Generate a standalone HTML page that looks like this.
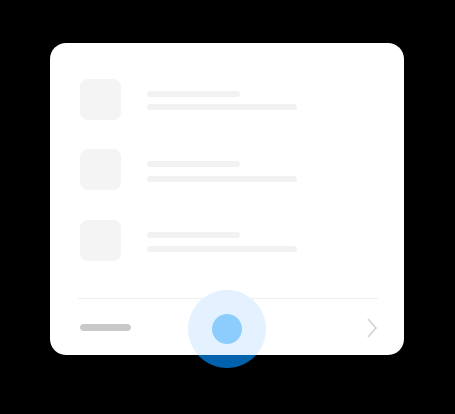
<!DOCTYPE html>
<html><head><style>
html,body{margin:0;padding:0;background:#000;width:455px;height:414px;overflow:hidden;position:relative}
.dark{position:absolute;left:188px;top:290px;width:78px;height:78px;border-radius:50%;background:#0062ad}
.card{position:absolute;left:50px;top:43px;width:354px;height:312px;border-radius:16px;background:#fff;overflow:hidden}
.sq{position:absolute;left:30px;width:41px;height:41px;border-radius:8px;background:#f4f4f4}
.l1{position:absolute;left:97px;width:93px;height:6px;border-radius:3px;background:#f2f2f2}
.l2{position:absolute;left:97px;width:150px;height:6px;border-radius:3px;background:#f2f2f2}
.div{position:absolute;left:28px;top:255px;width:300px;height:1px;background:#eeeeee}
.pill{position:absolute;left:30px;top:281px;width:51px;height:7px;border-radius:4px;background:#c9c9c9}
.halo{position:absolute;left:138px;top:247px;width:78px;height:78px;border-radius:50%;background:#e3f2fe}
.dot{position:absolute;left:162px;top:271px;width:30px;height:30px;border-radius:50%;background:#8dcdfe}
svg{position:absolute;left:314px;top:274px}
</style></head><body>
<div class="dark"></div>
<div class="card">
<div class="sq" style="top:36px"></div><div class="l1" style="top:48px"></div><div class="l2" style="top:61px"></div>
<div class="sq" style="top:106px"></div><div class="l1" style="top:118px"></div><div class="l2" style="top:133px"></div>
<div class="sq" style="top:177px"></div><div class="l1" style="top:189px"></div><div class="l2" style="top:203px"></div>
<div class="div"></div>
<div class="pill"></div>
<div class="halo"></div>
<div class="dot"></div>
<svg width="14" height="22" viewBox="0 0 14 22"><path d="M4 2 L12 11 L4 20" fill="none" stroke="#d0d0d0" stroke-width="1.5"/></svg>
</div>
</body></html>
